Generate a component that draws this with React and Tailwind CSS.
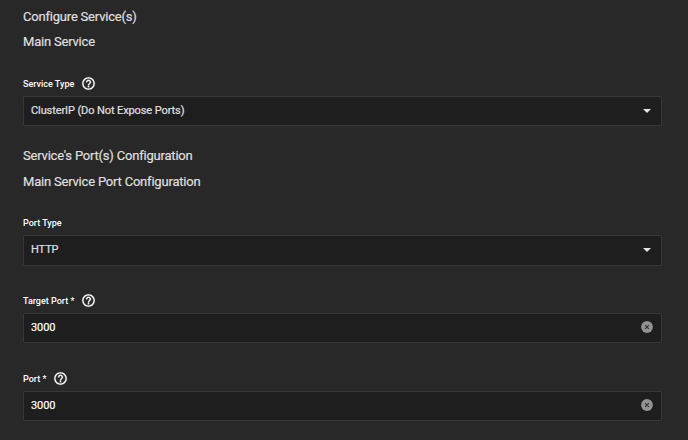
import React from "react";

function HelpIcon() {
  return (
    <svg viewBox="0 0 24 24" className="mb-px ml-[7px] h-[15px] w-[15px] shrink-0" fill="currentColor" stroke="currentColor" strokeWidth="0.4" aria-hidden="true">
      <path d="M11 18h2v-2h-2v2zm1-16C6.48 2 2 6.48 2 12s4.48 10 10 10 10-4.480 10-10S17.520 2 12 2zm0 18c-4.410 0-8-3.590-8-8s3.590-8 8-8 8 3.590 8 8-3.590 8-8 8zm0-14c-2.210 0-4 1.790-4 4h2c0-1.100.9-2 2-2s2 .9 2 2c0 2-3 1.750-3 5h2c0-2.250 3-2.500 3-5 0-2.210-1.790-4-4-4z" />
    </svg>
  );
}

function Arrow() {
  return (
    <svg viewBox="0 0 8 4" className="mr-[10px] h-1 w-2" fill="#e4e4e4" aria-hidden="true">
      <path d="M0 0h8L4 4z" />
    </svg>
  );
}

function ClearIcon() {
  return (
    <svg viewBox="0 0 12 12" className="mr-2 mb-px h-3 w-3" aria-hidden="true">
      <circle cx="6" cy="6" r="5.9" fill="#929292" />
      <path d="M4.100 4.100l3.800 3.800M7.900 4.100l-3.800 3.800" stroke="#333" strokeWidth="1.1" />
    </svg>
  );
}

function Field({ label, help, value, children, className, boxClass, valueClass }) {
  return (
    <div className={className}>
      <div className="flex h-4 items-center text-[9px] font-medium text-white">
        <span className="pt-px leading-[15px]">{label}</span>
        {help && <HelpIcon />}
      </div>
      <div className={`flex items-center justify-between border border-[#383838] bg-[#1e1e1e] pl-[7px] rounded-[1px] ${boxClass}`}>
        <span className={`text-[11px] leading-4 tracking-[-0.1px] [-webkit-text-stroke:0.2px_currentColor] ${valueClass}`}>{value}</span>
        {children}
      </div>
    </div>
  );
}

function Heading({ children, className = "" }) {
  return <h2 className={`text-[13px] leading-5 tracking-[-0.2px] text-[#e0e0e0] [-webkit-text-stroke:0.15px_currentColor] ${className}`}>{children}</h2>;
}

export default function App() {
  return (
    <main className="h-[440px] w-[688px] overflow-hidden bg-[#282828] pl-[23px] pr-[26px] pt-[7px] font-['Roboto',sans-serif]">
      <Heading>Configure Service(s)</Heading>
      <Heading className="mt-[5px]">Main Service</Heading>
      <Field className="mt-6" label="Service Type" help value="ClusterIP (Do Not Expose Ports)" boxClass="mt-1 h-[30px] pb-px" valueClass="text-[#e0e0e0]">
        <Arrow />
      </Field>
      <Heading className="mt-5">Service's Port(s) Configuration</Heading>
      <Heading className="mt-[6px]">Main Service Port Configuration</Heading>
      <Field className="mt-[23px]" label="Port Type" value="HTTP" boxClass="mt-1 h-[31px] pb-px" valueClass="text-[#e0e0e0]">
        <Arrow />
      </Field>
      <Field className="mt-[27px]" label="Target Port *" help value="3000" boxClass="mt-1 h-[30px] pb-px" valueClass="text-white">
        <ClearIcon />
      </Field>
      <Field className="mt-7" label="Port *" help value="3000" boxClass="mt-1 h-[30px] pb-px" valueClass="text-white">
        <ClearIcon />
      </Field>
    </main>
  );
}
